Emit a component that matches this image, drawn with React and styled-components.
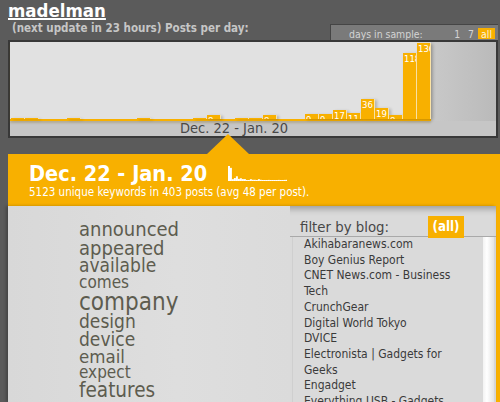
import React from 'react';
import styled, { createGlobalStyle } from 'styled-components';

const ORANGE = '#f8b000';

// posts per day, Dec. 22 -> Jan. 20
const days = [2, 1, 0, 0, 1, 0, 0, 0, 0, 1, 0, 0, 0, 2, 8, 0, 2, 2, 8, 0, 0, 9, 9, 17, 11, 36, 19, 8, 118, 136];
const SCALE = 0.559;

const words = [
  ['announced', 20],
  ['appeared', 20],
  ['available', 19],
  ['comes', 17],
  ['company', 24],
  ['design', 19],
  ['device', 19],
  ['email', 18.5],
  ['expect', 17],
  ['features', 20.5],
];

const blogs = [
  'Akihabaranews.com',
  'Boy Genius Report',
  'CNET News.com - Business Tech',
  'CrunchGear',
  'Digital World Tokyo',
  'DVICE',
  'Electronista | Gadgets for Geeks',
  'Engadget',
  'Everything USB - Gadgets',
  'Gizmodo',
];

const GlobalStyle = createGlobalStyle`
  html, body {
    margin: 0;
    padding: 0;
  }
  body {
    background: #5b5b5b;
    font-family: "DejaVu Sans", Verdana, sans-serif;
    font-stretch: condensed;
    overflow: hidden;
  }
`;

const Page = styled.div`
  width: 500px;
  height: 402px;
  padding-left: 8px;
  box-sizing: border-box;
  overflow: hidden;
`;

const Header = styled.header`
  height: 40px;
  display: flex;
  justify-content: space-between;
  align-items: flex-end;
  padding-right: 2px;
`;

const TitleBlock = styled.div`
  align-self: stretch;
  display: flex;
  flex-direction: column;
`;

const Title = styled.a`
  font-size: 18.5px;
  font-weight: bold;
  line-height: 20px;
  padding-top: 1px;
  color: #fff;
  text-decoration: underline;
  text-decoration-thickness: 1.5px;
  text-underline-offset: 1px;
  align-self: flex-start;
`;

const Subtitle = styled.div`
  font-size: 11.5px;
  font-weight: bold;
  line-height: 13px;
  color: #c6c6c6;
  padding-left: 4px;
  margin-top: 1px;
`;

const DaysPicker = styled.div`
  width: 168px;
  height: 16px;
  box-sizing: border-box;
  display: flex;
  align-items: stretch;
  padding: 3px 3px 1px 18px;
  background: #7a7a7a;
  border-top: 1px solid #454545;
  border-left: 1px solid #454545;
  font-size: 10.4px;
  line-height: 12px;
  color: #d4d4d4;
`;

const DaysLabel = styled.span`
  margin-right: auto;
`;

const DayOpt = styled.span`
  padding: 0 ${(p) => (p.$active ? 3 : 4)}px;
  background: ${(p) => (p.$active ? ORANGE : 'transparent')};
  color: ${(p) => (p.$active ? '#fbf3df' : '#d4d4d4')};
`;

const ChartBox = styled.div`
  width: 490px;
  box-sizing: border-box;
  border: 2px solid #383838;
  background: #c6c6c6;
`;

const Plot = styled.div`
  display: flex;
  height: 79px;
`;

const Bars = styled.div`
  width: 421px;
  box-sizing: border-box;
  padding-left: 1px;
  display: flex;
  align-items: flex-end;
  background: #e1e1e1;
  border-bottom: 2px solid ${ORANGE};
  box-shadow: 0 2px 2px rgba(120, 90, 0, 0.25);
  position: relative;
  z-index: 1;
`;

const Bar = styled.div`
  width: 14px;
  box-sizing: border-box;
  flex: none;
  background: ${ORANGE};
  border-right: 1px solid #fbe3a6;
  box-shadow: 2px 1px 3px rgba(0, 0, 0, 0.22);
  overflow: hidden;
`;

const BarLabel = styled.div`
  font-size: 9.5px;
  line-height: 10px;
  padding: 1px 0 0 1px;
  color: #fff;
  white-space: nowrap;
`;

const PlotRest = styled.div`
  flex: 1;
  background: linear-gradient(to right, #c9c9c9, #bababa);
`;

const ChartFooter = styled.div`
  height: 15px;
  padding-left: 170px;
  font-size: 14.5px;
  line-height: 15px;
  color: #484848;
`;

const Panel = styled.div`
  width: 492px;
  margin-top: 16px;
  background: ${ORANGE};
`;

const Summary = styled.section`
  position: relative;
  padding: 8px 0 7px 21px;
  color: #fff;

  &::before {
    content: '';
    position: absolute;
    top: -20px;
    left: 199px;
    border-left: 21.5px solid transparent;
    border-right: 21.5px solid transparent;
    border-bottom: 20px solid ${ORANGE};
  }
`;

const SummaryHead = styled.div`
  display: flex;
  align-items: baseline;
  gap: 21px;
`;

const RangeTitle = styled.h1`
  margin: 0;
  font-size: 21.5px;
  font-weight: bold;
  line-height: 24px;
`;

const Spark = styled.svg`
  display: block;
  margin-bottom: -1px;
`;

const SummaryText = styled.div`
  font-size: 11.5px;
  line-height: 13px;
`;

const Body = styled.div`
  width: 488px;
  height: 196px;
  display: flex;
  background: #dadada;
  box-shadow: inset 0 7px 6px -4px rgba(0, 0, 0, 0.28), -2px 0 3px rgba(0, 0, 0, 0.25);
`;

const WordCloud = styled.div`
  width: 282px;
  flex: none;
  box-sizing: border-box;
  padding: 14px 0 0 71px;
  overflow: hidden;
  background: linear-gradient(to right, #d8d8d8, #dedede 60%, #dbdbdb);
`;

const Word = styled.a`
  display: block;
  font-size: ${(p) => p.$size}px;
  line-height: 0.93;
  color: #5d5c4f;
  text-decoration: none;
`;

const FilterPanel = styled.div`
  flex: 1;
  display: flex;
  flex-direction: column;
  min-width: 0;
`;

const FilterHeader = styled.div`
  height: 31px;
  box-sizing: border-box;
  display: flex;
  align-items: flex-end;
  padding: 0 32px 0 10px;
  border-bottom: 1px solid #a9a9a9;
`;

const FilterLabel = styled.span`
  font-size: 14.8px;
  line-height: 18px;
  color: #474747;
`;

const AllBadge = styled.span`
  margin-left: auto;
  margin-bottom: -2px;
  padding: 0 4.5px;
  height: 22px;
  line-height: 22px;
  font-size: 13.2px;
  font-weight: bold;
  color: #fff;
  background: ${ORANGE};
`;

const ListRow = styled.div`
  flex: 1;
  display: flex;
  min-height: 0;
`;

const BlogList = styled.ul`
  flex: 1;
  margin: 0 0 0 2px;
  padding: 0 10px 0 11px;
  list-style: none;
  border-left: 1px solid #cfcfcf;
  font-size: 12px;
  line-height: 15.7px;
  color: #3a3a3a;
  overflow: hidden;
`;

const ScrollTrack = styled.div`
  width: 11px;
  margin-right: 2px;
  background: linear-gradient(to right, #f2f2f2, #ffffff 35%, #e4e4e4);
`;

function Sparkline() {
  const rev = [...days].reverse();
  const w = 2;
  return (
    <Spark width="59" height="15" viewBox="0 0 59 15">
      {rev.map((v, i) => {
        const h = 1 + (v / 136) * 14;
        return <rect key={i} x={i * w - (i ? 0.1 : 0)} y={15 - h} width={w} height={h} fill="#fff" />;
      })}
    </Spark>
  );
}

export default function App() {
  return (
    <>
      <GlobalStyle />
      <Page>
        <Header>
          <TitleBlock>
            <Title href="#">madelman</Title>
            <Subtitle>(next update in 23 hours) Posts per day:</Subtitle>
          </TitleBlock>
          <DaysPicker>
            <DaysLabel>days in sample:</DaysLabel>
            <DayOpt>1</DayOpt>
            <DayOpt>7</DayOpt>
            <DayOpt $active>all</DayOpt>
          </DaysPicker>
        </Header>

        <ChartBox>
          <Plot>
            <Bars>
              {days.map((v, i) => (
                <Bar key={i} style={{ height: v * SCALE }}>
                  {v >= 8 && <BarLabel>{v}</BarLabel>}
                </Bar>
              ))}
            </Bars>
            <PlotRest />
          </Plot>
          <ChartFooter>Dec. 22 - Jan. 20</ChartFooter>
        </ChartBox>

        <Panel>
          <Summary>
            <SummaryHead>
              <RangeTitle>Dec. 22 - Jan. 20</RangeTitle>
              <Sparkline />
            </SummaryHead>
            <SummaryText>5123 unique keywords in 403 posts (avg 48 per post).</SummaryText>
          </Summary>

          <Body>
            <WordCloud>
              {words.map(([w, s]) => (
                <Word key={w} href="#" $size={s}>{w}</Word>
              ))}
            </WordCloud>
            <FilterPanel>
              <FilterHeader>
                <FilterLabel>filter by blog:</FilterLabel>
                <AllBadge>(all)</AllBadge>
              </FilterHeader>
              <ListRow>
                <BlogList>
                  {blogs.map((b) => (
                    <li key={b}>{b}</li>
                  ))}
                </BlogList>
                <ScrollTrack />
              </ListRow>
            </FilterPanel>
          </Body>
        </Panel>
      </Page>
    </>
  );
}
